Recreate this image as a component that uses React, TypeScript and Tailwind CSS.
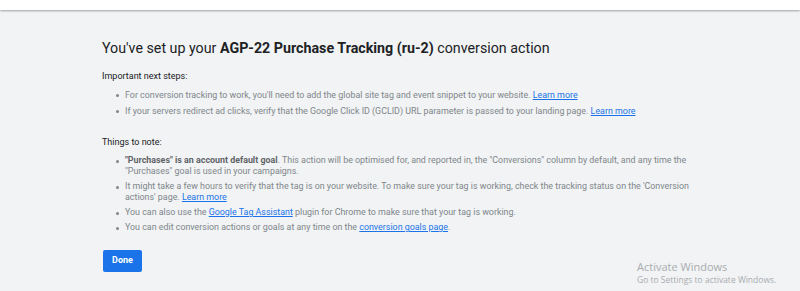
import React from 'react'

const font = { fontFamily: 'Roboto, "Liberation Sans", sans-serif' }

function Link({ children }: { children: React.ReactNode }) {
  return <a className="text-[#1a73e8] underline underline-offset-1">{children}</a>
}

function Item({ children }: { children: React.ReactNode }) {
  return (
    <li className="flex gap-[6px]">
      <span className="shrink-0 w-[3px] h-[3px] mt-[5px] rounded-full bg-[#80868b]" />
      <span>{children}</span>
    </li>
  )
}

export default function App() {
  return (
    <div className="w-[800px] h-[291px] bg-[#f1f3f4] overflow-hidden relative" style={font}>
      <div className="h-[10px] bg-white shadow-[0_1px_2px_rgba(60,64,67,0.45)]" />
      <div className="pl-[102px] pt-[28px]">
        <h1 className="text-[14.25px] leading-[20px] text-[#202124]">
          You've set up your <b className="font-bold">AGP-22 Purchase Tracking (ru-2)</b> conversion action
        </h1>

        <p className="mt-[12px] text-[9px] leading-[12px] text-[#202124]">Important next steps:</p>
        <ul className="mt-[7px] ml-[14px] flex flex-col gap-[4px] text-[8.9px] leading-[12px] text-[#80868b]">
          <Item>
            For conversion tracking to work, you'll need to add the global site tag and event snippet to your website.{' '}
            <Link>Learn more</Link>
          </Item>
          <Item>
            If your servers redirect ad clicks, verify that the Google Click ID (GCLID) URL parameter is passed to your landing page.{' '}
            <Link>Learn more</Link>
          </Item>
        </ul>

        <p className="mt-[19px] text-[9px] leading-[12px] text-[#202124]">Things to note:</p>
        <ul className="mt-[7px] ml-[14px] w-[586px] flex flex-col gap-[4px] text-[8.9px] leading-[11px] text-[#80868b]">
          <Item>
            <b className="font-bold text-[#5f6368]">"Purchases" is an account default goal</b>. This action will be optimised for, and reported in, the "Conversions" column by default, and any time the "Purchases" goal is used in your campaigns.
          </Item>
          <Item>
            It might take a few hours to verify that the tag is on your website. To make sure your tag is working, check the tracking status on the 'Conversion actions' page. <Link>Learn more</Link>
          </Item>
          <Item>
            You can also use the <Link>Google Tag Assistant</Link> plugin for Chrome to make sure that your tag is working.
          </Item>
          <Item>
            You can edit conversion actions or goals at any time on the <Link>conversion goals page</Link>.
          </Item>
        </ul>

        <button className="mt-[17px] ml-[1px] w-[39px] h-[22px] rounded-[2px] bg-[#1a73e8] text-white text-[9px] font-bold">
          Done
        </button>
      </div>

      <div className="absolute left-[637px] top-[259px] text-[#a9acb0]" style={{ fontFamily: '"Open Sans", "Noto Sans", sans-serif' }}>
        <div className="text-[11px] leading-[15px]">Activate Windows</div>
        <div className="text-[8.5px] leading-[12px]">Go to Settings to activate Windows.</div>
      </div>
    </div>
  )
}
